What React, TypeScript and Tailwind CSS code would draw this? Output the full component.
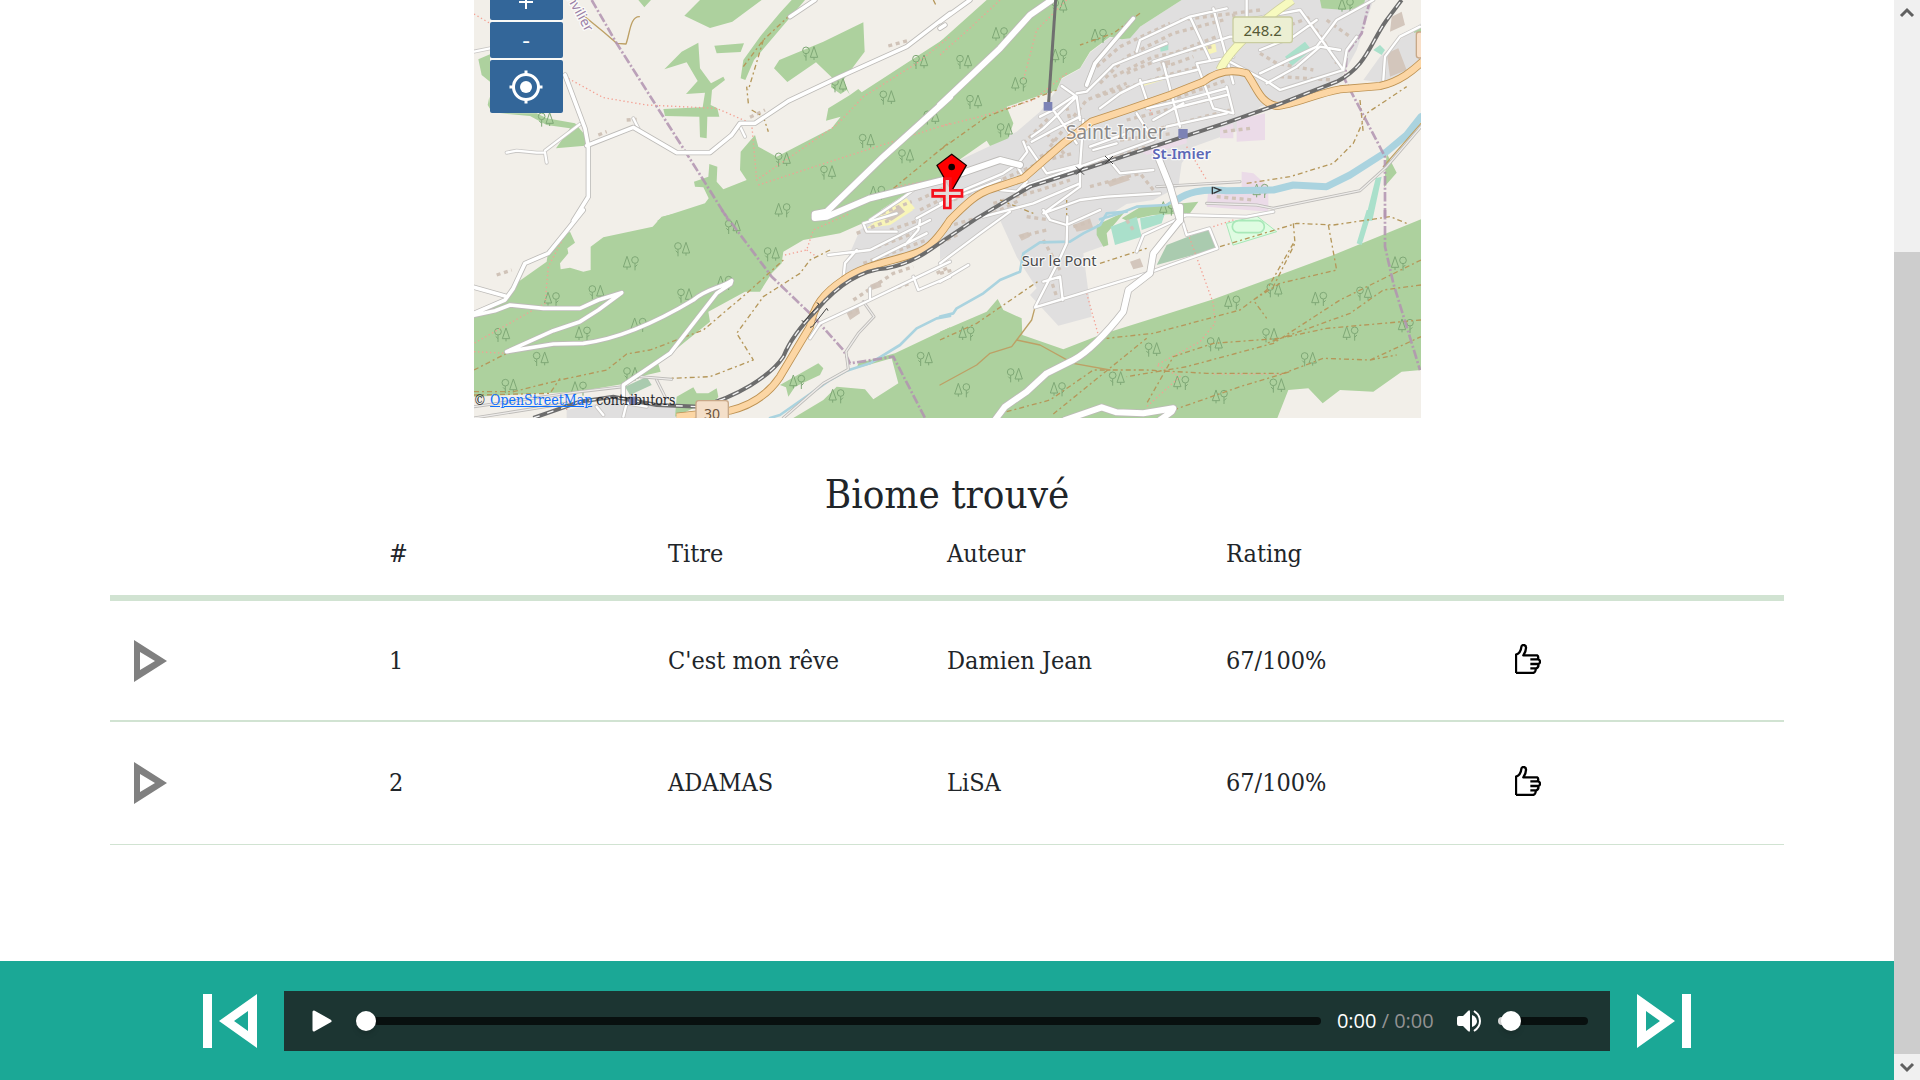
import React from "react";

type Quad = "nw" | "ne" | "sw" | "se";
type Paths = Partial<Record<Quad, string>>;

const origin: Record<Quad, string> = {
  nw: "translate(-12 0)",
  ne: "translate(1398 0)",
  sw: "translate(-12 630)",
  se: "translate(1398 630)",
};

function Layer({ d, ...rest }: { d: Paths } & Omit<React.SVGProps<SVGPathElement>, "d">) {
  return (
    <>
      {(Object.keys(d) as Quad[]).map((q) => (
        <path key={q} d={d[q]} transform={origin[q]} fill="none" strokeLinejoin="round" strokeLinecap="round" {...rest} />
      ))}
    </>
  );
}

function Road({ d, w, color = "#ffffff", casing = "#bdbbb8" }: { d: Paths; w: number; color?: string; casing?: string }) {
  return (
    <>
      <Layer d={d} stroke={casing} strokeWidth={w + 5} />
      <Layer d={d} stroke={color} strokeWidth={w} />
    </>
  );
}

const urban: Paths = {
  nw: "M1310 580L1440 515V662H1180L1240 620Z",
  ne: "M725 0L600 80L545 118L510 112L450 158L420 207L365 237L350 270L300 335L230 395L150 438L60 480L0 530V662H480L560 612L640 600L715 560L725 490L760 440L900 390L960 320L1060 290L1200 240L1250 150L1300 0ZM1380 120L1443 70V190L1340 250L1270 240L1320 170Z",
  sw: "M1170 60L1240 0H1440V60L1380 110L1230 160L1120 208L1135 140ZM290 600L460 565L620 590V624H290Z",
  se: "M180 30L0 150V0H500L470 50L490 108L430 130L455 320L355 347L270 255L290 235L230 140Z",
};

const forest: Paths = {
  nw: "M505 0L523 22L543 0ZM690 0L643 47L720 84L787 65L875 0ZM965 0L930 38L870 110L820 180L812 235L826 240L852 180L920 100L1005 0ZM733 137L822 130L812 156L740 160ZM685 128L635 155L583 208L650 187L683 243L648 282L705 278L698 322L580 327L585 348L688 350L690 412L710 415L712 350L748 350L742 325L722 315L726 270L765 240L760 230L723 250L690 205ZM1180 67L1060 125L928 180L912 205L952 246L1038 187L1085 232L1083 262L1112 282L1130 270L1140 285L1075 325L1068 362L1112 350L1085 385L920 470L865 440L855 405L812 455L810 510L830 540L760 568L740 545L742 500L718 492L715 530L672 545L675 560L700 562L716 595L705 610L580 650L560 664H1180L1310 580L1440 520V105L1175 277L1165 267L1140 285L1120 240L1184 155ZM60 163L25 178L35 225L60 245ZM58 290L53 315L62 330ZM90 340L180 348L230 375L300 385L258 445L345 437V405L315 370L230 355L200 340Z",
  ne: "M0 125L140 0H725L600 80L570 115L545 118L510 110L450 155L420 205L365 235L350 270L200 320L220 370L205 415L150 438L140 422L0 520ZM1140 0L1145 25L1215 30L1270 22L1275 0ZM545 655L600 622L775 605L750 640L640 645L560 662ZM1340 460L1370 518L1332 562ZM1422 85L1443 78V95L1422 98Z",
  sw: "M660 0L575 20L548 50L400 82L362 110V180L340 185L300 173L272 178L270 160L295 130L292 115L315 98L300 65L285 75L270 100L235 120L230 155L145 215L100 270L12 310V560L320 545L460 522L530 495L572 485L565 462L640 400L720 335L715 305L825 245L870 245L905 190L935 160L940 125L1000 90L1110 70L1200 30L1260 0ZM930 525L1045 460L1060 475L1050 495L975 530L955 560L948 532ZM620 560L670 532L680 550L715 550L740 535L745 560L735 575L680 590L615 620ZM1440 352L1275 430L1165 460L1160 475L1265 445L1285 520L1210 568L1185 538L1100 530L1060 570L970 624H1440Z",
  se: "M0 365L140 305L173 267L190 300L245 325L247 375L370 418L480 375L640 325L820 268L1180 135L1443 28V480L1385 485L1300 545L1200 540L1148 580L1105 535L1045 540L1012 624H0ZM470 45L555 5L500 70L505 105L490 110L470 75Z",
};

const buildings: Paths = {
  nw: "M1235 640L1325 605M1345 600L1430 560M1350 630L1430 590M470 360L500 358M385 405L410 395M1255 138L1320 120M840 352L885 330",
  ne: "M250 430L330 350M330 440L440 300L560 250M300 470L400 420M560 220L700 160L830 110M480 250L560 170L700 100L850 60M470 290L700 220L780 200M600 320L720 290L860 240M560 360L720 320L850 290M640 390L870 330M540 420L700 400M880 40L900 150M940 60L1010 50L980 130M960 160L1010 190L1120 210M1100 50L1150 120L1190 190M1160 60L1230 110M720 60L960 30M40 600L160 550L320 480L400 460M160 610L300 570L390 540M450 560L600 520L640 570M430 500L620 440M160 640L240 600M830 590L940 600M850 395L930 385M470 200L540 140L690 70M520 230L640 170L820 140M650 210L760 170M1020 230L1180 240M1010 90L1090 60M1030 120L1060 110M320 400L380 470M380 320L400 400",
  sw: "M1160 70L1260 30M1200 120L1330 70M1180 160L1370 90M1260 60L1350 30M1150 270L1270 190L1330 170M1260 240L1320 220M1135 310L1165 300M80 195L125 180M1400 190L1440 170",
  se: "M20 50L160 10M240 80L320 60M260 20L330 30M310 90L360 180M0 100L60 70M400 50L450 35M0 190L40 180M330 200L350 260M560 30L580 60",
};

const streets: Paths = {
  nw: "M12 155L60 145M110 458L140 452L200 458L225 458L230 488M225 452L330 372M1200 660L1290 600L1330 570M1340 655L1440 600M490 355L505 385M808 375L825 410",
  ne: "M60 575L190 520L235 490M180 570L230 575L260 545L235 505M235 490L262 455L250 425M265 440L320 520L420 495M275 425L340 390L420 350M275 410L310 385L410 290L365 258M300 350L340 330L410 430M340 330L400 290M410 290L420 360M410 280L440 275L520 195L680 130M480 325L540 280L600 250L770 210M600 240L620 300M670 190L720 380M590 155L600 120L750 50L860 25M750 50L810 180M820 25L880 250M640 185L870 110L920 110M770 190L820 325L880 340L860 260M770 190L880 170M920 0V60L1080 30L1210 210L1020 270L990 250L860 180M960 220L1130 140L1190 60L1300 0M980 250L1070 200L1140 140L1200 150M1130 60L1060 110L960 150M1250 110L1220 150L1210 210M620 325L730 300L860 265M700 325L860 285M640 360L730 310M590 340L640 420L420 500M420 500L430 360M420 500V560L310 640M500 470L540 520L640 510M310 640L420 600L500 590L660 580M130 650L280 610L420 550M250 560L420 500M530 430L460 450M680 380L860 340M1330 240L1335 170L1380 110L1440 80M450 440L560 400M0 610L180 540",
  sw: "M1075 135L1200 120L1380 30M1120 210L1125 160L1160 120M1180 40L1190 65L1280 65M1210 150L1370 70M1350 30L1345 60L1305 105M1280 10L1180 40M1020 385L1050 340L1200 270L1440 155M1200 235V265M1330 200L1345 240L1440 200M460 620L470 580L530 590M380 590L400 615",
  se: "M0 160L120 70L210 5M0 215L85 165M310 0L330 30L380 45L480 0M382 20L380 100L355 155L285 292L360 270M310 215L360 200L368 270M285 292L620 190L832 115L808 55L740 75L722 15L920 20L1000 5M590 125L610 75L740 15",
};

const mainRoads: Paths = {
  nw: "M285 225L345 385L355 440V590L310 662M350 437L490 382L620 458H720L785 405L810 370H855L955 303L1110 230L1310 140L1440 40M960 50L1035 0",
  ne: "M0 65L90 0M440 255L465 190L580 55M0 85L15 75",
  sw: "M340 0L280 75L235 130L165 160L130 235L105 270L12 310M12 232L105 258M12 316L75 302L120 285L220 295H330L385 270L455 248L385 300L330 335L250 362L110 425L250 402L340 400C420 390 520 360 670 270C710 235 750 235 785 212L782 222L740 250L600 430L460 525V560",
};

const bigRoads: Paths = {
  nw: "M1440 290L1240 470L1070 635L1034 642L1034 654L1070 650L1200 595L1440 535",
  ne: "M335 0L270 45L180 145L0 315M20 535L180 480L240 495M650 460L690 560L720 662",
  se: "M720 -10V30L640 130L630 190L565 240L550 305C500 370 440 430 400 450L320 490L260 545L195 590L165 630M375 630L485 592L530 607L610 610L700 595L695 605L660 630",
};

const footpaths: Paths = {
  nw: "M12 42L60 70M285 230L400 293L530 315L740 325L820 360L845 370L860 540L1100 375L1180 290L1340 190L1440 110M865 555L1080 485L1440 370M1280 560L1440 530",
  ne: "M0 165L100 75L180 0M380 0L290 90L250 240M380 220L280 300L120 350L0 380M630 330L640 350M740 440L800 540",
  sw: "M285 75L235 170L225 280L12 400M12 425L110 430M945 135L1010 120L1030 60L1140 10M1010 120L1040 140M290 600V560",
  se: "M820 50L880 30M740 60L820 280L825 340L780 395L650 465L720 500L620 590M440 250L475 375M820 492H1030",
};

const tracks: Paths = {
  nw: "M960 45L880 120L820 200M880 120L835 270M835 310L830 260M845 330L880 350L895 395M1240 590L1440 425M1390 0L1400 20",
  ne: "M0 450L140 350L350 270M600 40L520 100L420 135M920 550L1050 530L1180 490L1240 430L1280 340L1400 260M180 600L280 640M380 600V660M1260 300L1270 400",
  sw: "M12 480L110 430M12 545H130L270 510L410 480L470 432L540 420L700 360L830 250L940 150M1080 120L1020 150L990 190L880 260L800 370L850 450L720 500L600 505M12 555L240 550L270 505",
  se: "M0 390L110 340L300 210M480 160L620 115M840 110L1070 40L1180 45L1350 20L1400 40M1060 100L980 240L900 300L640 370L500 385M1060 40L1065 100L1000 230M1165 45L1190 180L1020 220L940 270L980 325M1443 150L1200 270L1000 400L740 470L560 500M1443 225L1330 240L1230 310L980 400M1443 330L1160 355L1020 385L820 400L700 440L620 580M200 605L330 570L460 480L620 480L800 490L1030 490L1150 445L1290 450L1443 380M340 612L620 385M700 600L900 530L1050 485M1290 450L1370 435",
};

const brownTracks: Paths = {
  nw: "M345 50L400 95L440 130L468 132C480 100 480 50 508 50",
  ne: "M1443 370L1330 500",
  se: "M285 292L275 330L230 390L215 410L150 430L110 465L0 525M230 390L300 405L400 460L510 480",
};

const streams: Paths = {
  sw: "M1440 318L1400 325L1340 355L1290 405L1200 460L1130 482L1080 510L930 615L900 624",
  se: "M0 320L40 310L50 295L130 250L180 210L240 185L250 130L300 97L390 95L430 70L480 45L500 10L560 5",
  ne: "M480 658L540 640L590 620L680 615L720 590",
};

const river: Paths = { ne: "M710 600C740 580 780 565 860 572L1000 570L1060 555L1160 560L1230 525L1340 455L1400 405L1443 350" };

const lanes: Paths = {
  ne: "M650 560L900 545M800 610L950 615L1000 625L1260 572L1340 500L1443 380",
  sw: "M1180 275L1212 320L1165 370L1128 425L1135 478L1060 520L940 624M510 500L605 508M560 510L585 560M12 590L330 545L460 530M12 624L290 580",
};

const boundary: Paths = {
  nw: "M365 0L440 130L700 540L775 660",
  sw: "M755 0L905 200L1030 320L1120 420L1140 460L1270 440L1365 624",
  ne: "M1290 0L1265 100L1220 160L1215 240L1335 470V660",
  se: "M1335 0V110L1360 220L1440 480",
};

const primary = "M608 1250L768 1232C858 1210 898 1160 918 1130L1008 980C1018 920 1048 880 1108 840C1188 780 1318 780 1368 735C1400 705 1414 680 1428 660C1478 610 1508 580 1558 565L1648 535L1768 430L1853 365L1958 330L2088 285L2188 245C2228 215 2268 205 2318 220C2348 260 2358 310 2408 318C2458 315 2528 280 2598 268L2718 258C2778 245 2818 210 2845 185";
const railway = "M178 1254L318 1205L418 1190L548 1215L678 1220C788 1190 888 1130 928 1070C948 1020 988 970 1028 930C1088 860 1158 810 1238 805C1318 790 1368 750 1408 722L1508 655L1668 560L1818 512L2038 440L2258 368L2408 315L2588 245C2678 200 2688 130 2738 60L2783 0";

// [x, y, conifer on the left]
const trees: [number, number, boolean][] = [
  [1008, 160, false], [1338, 185, false], [1240, 292, false], [1372, 352, false], [1178, 422, false], [1296, 468, false], [1062, 517, false], [926, 630, true], [926, 478, false], [1210, 578, true], [1095, 255, false], [215, 358, false],
  [1578, 102, true], [1470, 185, false], [1875, 107, true], [1756, 167, true], [1636, 252, true], [1500, 305, false], [1592, 390, false], [1756, 18, false], [2360, 572, true], [2080, 625, true], [2616, 15, true],
  [776, 680, false], [893, 762, false], [624, 747, false], [471, 789, true], [367, 876, false], [234, 897, true], [633, 886, false], [494, 974, true], [327, 1000, true], [84, 1004, false], [200, 1076, false], [106, 1157, false], [471, 1122, false], [315, 1165, true], [970, 1145, true], [1088, 1188, true], [1352, 1076, false], [752, 848, true],
  [1478, 1000, true], [1622, 1125, false], [1465, 1170, true], [1752, 1167, true], [1928, 1135, false], [2036, 1048, false], [2222, 1032, false], [2122, 1148, true], [2238, 1190, true], [2410, 1156, false], [2504, 1077, false], [2388, 1005, false], [2275, 907, true], [2401, 870, false], [2536, 896, true], [2670, 880, false], [2775, 790, true], [2796, 977, true], [2630, 1000, true],
];

function MapDrawing() {
  return (
    <svg viewBox="0 0 2841 1254" preserveAspectRatio="xMidYMax slice" className="block h-full w-full" aria-label="Carte de Saint-Imier" role="img" fontFamily='"Noto Sans", sans-serif'>
      <rect width="2841" height="1254" fill="#f2efe9" />
      <Layer d={urban} style={{ fill: "#e0dfdf" }} />
      <Layer d={forest} style={{ fill: "#add19e" }} />
      <Layer d={{ ne: "M890 360L975 340V420L890 425ZM905 515L940 520L985 560V635L800 620L805 570L905 560ZM840 385L880 370V415H840ZM600 450L740 410L740 430L620 465Z" }} style={{ fill: "#ebdbe8" }} />
      <Layer d={{ ne: "M1035 170L1095 125L1115 150L1055 198ZM1300 150L1320 135L1335 150L1325 165ZM660 140L685 132V150L662 155ZM1307 535L1325 530L1297 662H1275Z", se: "M512 50L590 20L605 80L525 105ZM600 25L675 10L665 40L605 60ZM1280 0H1297L1265 105L1250 100Z" }} style={{ fill: "#aae0cb" }} />
      <Layer d={{ se: "M860 40L950 18L1010 65L880 105Z" }} stroke="#a8e8b8" strokeWidth="3" style={{ fill: "#dffce2" }} />
      <Layer d={{ se: "M895 32H955A17 17 0 0 1 955 68H895A17 17 0 0 1 895 32Z" }} stroke="#a8e8b8" strokeWidth="5" />
      <Layer d={{ se: "M650 165L680 105L810 55L832 115Z", sw: "M465 530L530 500L545 525L480 555Z" }} style={{ fill: "#aacbaf" }} />
      <Layer d={{ nw: "M1200 655L1310 595L1335 625L1270 662Z", ne: "M605 245L665 228L670 240L610 258ZM795 140L825 125L830 155L800 165Z", sw: "M1190 55L1260 0H1330L1260 45Z" }} style={{ fill: "#f8f5b8" }} />
      <Layer d={{ nw: "M1235 655L1290 618L1305 635L1265 662Z", ne: "M1340 160L1375 145L1400 210L1350 230ZM1355 50L1385 35L1395 75L1350 95ZM660 185L690 180V195L665 198ZM500 545L560 525L570 540L510 560Z", sw: "M1130 310L1165 290L1170 310L1140 330ZM1200 225L1230 212L1235 230L1205 240Z", se: "M400 45L450 25L460 55L410 65ZM570 155L600 145L610 170L580 178ZM235 75L265 65L270 80L245 92Z" }} style={{ fill: "#d3c6bc" }} />
      <Layer d={buildings} stroke="#d0c3b8" strokeWidth="10" strokeDasharray="12 11" style={{ strokeLinecap: "butt" }} />
      <g stroke="#7fa876" strokeWidth="3" fill="none" strokeLinejoin="round">
        {trees.map(([x, y, fir]) => (
          <g key={`${x}-${y}`} transform={`translate(${x} ${y})${fir ? "" : " scale(-1 1)"}`}>
            <path d="M-12 -20L-23 12H-1ZM-12 12V20" />
            <circle cx="12" cy="-9" r="10" />
            <path d="M12 1V22M12 12L19 5" />
          </g>
        ))}
      </g>
      <Layer d={streams} stroke="#aad3df" strokeWidth="8" />
      <Layer d={river} stroke="#aad3df" strokeWidth="21" />
      <Layer d={footpaths} stroke="#f4a093" strokeWidth="4" strokeDasharray="4 8" style={{ strokeLinecap: "butt" }} />
      <Layer d={tracks} stroke="#b5975a" strokeWidth="4" strokeDasharray="15 9 6 9" style={{ strokeLinecap: "butt" }} />
      <Layer d={brownTracks} stroke="#bda065" strokeWidth="4" />
      <Layer d={boundary} stroke="#b193b0" strokeWidth="8" strokeDasharray="28 7 6 7" style={{ strokeLinecap: "butt" }} opacity="0.85" />
      <Road d={lanes} w={4} color="#eeecea" />
      <Road d={streets} w={7} casing="#c9c7c5" />
      <Road d={mainRoads} w={11} />
      <Road d={bigRoads} w={18} />
      <path d="M1745 0L1723 320" stroke="#6f6f6f" strokeWidth="9" />
      <path d="M2238 210C2270 140 2380 50 2455 0" fill="none" stroke="#cfd0a0" strokeWidth="27" />
      <path d="M2238 210C2270 140 2380 50 2455 0" fill="none" stroke="#f7fabf" strokeWidth="22" />
      <path d={primary} fill="none" stroke="#bd9253" strokeWidth="24" />
      <path d={primary} fill="none" stroke="#fcd6a4" strokeWidth="19" />
      <path d={railway} fill="none" stroke="#6d6d6d" strokeWidth="12" />
      <path d={railway} fill="none" stroke="#f5f5f5" strokeWidth="4" strokeDasharray="20 24" />
      <path d="M990 965L1035 912M1015 980L1058 925M983 962L990 965M1008 982L1015 980M1028 908L1035 912M1058 925L1062 932M1806 500L1830 524M1830 500L1806 524M1893 468L1917 492M1917 468L1893 492" stroke="#444" strokeWidth="3" fill="none" />
      <path d="M2215 560V583M2218 562L2240 570L2218 580" stroke="#333" strokeWidth="4" fill="none" />
      <g fill="#7c82b5">
        <rect x="1709" y="306" width="26" height="26" />
        <rect x="2113" y="387" width="28" height="28" />
        <rect x="465" y="1190" width="24" height="24" />
      </g>
      <rect x="2277" y="51" width="178" height="77" rx="8" fill="#ecefd3" stroke="#c9cda0" strokeWidth="4" />
      <text x="2366" y="108" textAnchor="middle" fontSize="45" fill="#555a36">248.2</text>
      <rect x="2827" y="96" width="40" height="78" rx="8" fill="#f8dfc8" stroke="#c8a888" strokeWidth="4" />
      <rect x="666" y="1202" width="97" height="80" rx="8" fill="#f4dfc9" stroke="#c8a888" strokeWidth="4" />
      <text x="714" y="1256" textAnchor="middle" fontSize="42" fill="#6b533c">30</text>
      <g stroke="#fff" strokeWidth="7" strokeOpacity="0.75" paintOrder="stroke" strokeLinejoin="round">
        <text x="1775" y="418" fontSize="58" fill="#8a8888">Saint-Imier</text>
        <text x="2035" y="476" fontSize="45" fontWeight="600" fill="#5b68b8">St-Imier</text>
        <text x="1643" y="798" fontSize="44" fill="#4a4a4a">Sur le Pont</text>
        <text transform="translate(266 -27) rotate(61)" x="0" y="0" fontSize="41" fill="#9a7fa6">onvilier</text>
      </g>
      <path d="M1433 463L1477 496L1433 573L1389 496Z" fill="#f00" stroke="#1a0000" strokeWidth="4" />
      <circle cx="1433" cy="501" r="10" fill="#100" />
      <path d="M1411 536H1429V571H1464V589H1429V624H1411V589H1376V571H1411Z" fill="#e4dcda" fillOpacity="0.9" stroke="#f5101c" strokeWidth="8" />
    </svg>
  );
}

const mapButton = "flex w-full items-center justify-center rounded-xs bg-[#336699] text-white";

function MapPanel() {
  return (
    <section className="relative mx-auto h-[418px] w-1/2 overflow-hidden">
      <MapDrawing />
      <div className="absolute -top-4 left-4 flex w-[73px] flex-col gap-0.5 bg-white/60">
        <button type="button" aria-label="Zoom avant" className={`${mapButton} h-9`}>
          <svg viewBox="0 0 14 14" className="h-3.5 w-3.5"><path d="M7 0V14M0 7H14" stroke="#fff" strokeWidth="2" /></svg>
        </button>
        <button type="button" className={`${mapButton} h-9 font-['Open_Sans',sans-serif] text-2xl leading-none`}>-</button>
        <button type="button" aria-label="Me localiser" className={`${mapButton} h-[53px]`}>
          <svg viewBox="0 0 34 34" className="h-[34px] w-[34px]" fill="none" stroke="#fff">
            <circle cx="17" cy="17" r="12.5" strokeWidth="3" />
            <circle cx="17" cy="17" r="6" fill="#fff" stroke="none" />
            <path d="M17 0.500V5M17 29V33.500M0.500 17H5M29 17H33.500" strokeWidth="3" />
          </svg>
        </button>
      </div>
      <p className="absolute bottom-2 left-0 text-sm leading-5">
        © <a href="#osm" className="text-[#0d6efd] underline">OpenStreetMap</a> contributors
      </p>
    </section>
  );
}

function ThumbIcon() {
  return (
    <svg viewBox="0 0 78 90" className="h-[30px] w-[26px]" fill="none" stroke="#000" strokeWidth="7" strokeLinejoin="round">
      <path d="M3 87V32C12 29 18 20 19 9C20 0 34 1 33 12C33 20 29 28 25 34H66C71 37 71 44 66 46H46M66 46H70C77 50 77 57 70 60H46M70 60C71 66 69 71 64 73H46M62 73C63 80 59 86 54 87H3" />
    </svg>
  );
}

const songs = [
  { id: 1, title: "C'est mon rêve", author: "Damien Jean", rating: "67/100%" },
  { id: 2, title: "ADAMAS", author: "LiSA", rating: "67/100%" },
];

function Songs() {
  return (
    <section className="mx-auto mt-13 w-[1674px] max-w-[90%]">
      <h1 className="text-center text-[40px] leading-12">Biome trouvé</h1>
      <table className="w-full table-fixed border-collapse text-left text-[25px]">
        <thead>
          <tr className="h-20 border-b-6 border-[#d1e3d2]">
            <td />
            <th scope="col" className="pb-1.5 font-normal">#</th>
            <th scope="col" className="pb-1.5 font-normal">Titre</th>
            <th scope="col" className="pb-1.5 font-normal">Auteur</th>
            <th scope="col" className="pb-1.5 font-normal">Rating</th>
            <td />
          </tr>
        </thead>
        <tbody>
          {songs.map((s) => (
            <tr key={s.id} className="h-[123px] border-b-2 border-[#d1e3d2] last:border-b">
              <td>
                <button type="button" aria-label={`Lire ${s.title}`} className="ml-6 block">
                  <svg viewBox="0 0 33 42" className="h-[42px] w-[33px]"><path fill="#808080" fillRule="evenodd" d="M0 0L33 21L0 42ZM6 12V30L21 21Z" /></svg>
                </button>
              </td>
              <td>{s.id}</td>
              <td>{s.title}</td>
              <td>{s.author}</td>
              <td>{s.rating}</td>
              <td>
                <button type="button" aria-label={`Aimer ${s.title}`} className="mb-1 ml-2.5 block"><ThumbIcon /></button>
              </td>
            </tr>
          ))}
        </tbody>
      </table>
    </section>
  );
}

const slider =
  "h-5 cursor-pointer appearance-none bg-transparent [&::-webkit-slider-runnable-track]:h-2 [&::-webkit-slider-runnable-track]:rounded-full [&::-webkit-slider-runnable-track]:bg-[#08100f] [&::-webkit-slider-thumb]:-mt-1.5 [&::-webkit-slider-thumb]:size-5 [&::-webkit-slider-thumb]:appearance-none [&::-webkit-slider-thumb]:rounded-full [&::-webkit-slider-thumb]:bg-white [&::-webkit-slider-thumb]:shadow-md";

function SkipIcon({ className = "" }: { className?: string }) {
  return (
    <svg viewBox="0 0 54 54" className={`size-[54px] ${className}`}>
      <path fill="#fff" fillRule="evenodd" d="M0 0L38 27L0 54ZM9 17V37L23 27ZM45 0H54V54H45Z" />
    </svg>
  );
}

function Player() {
  return (
    <footer className="mt-auto flex h-[119px] items-center justify-center bg-[#1ba896]">
      <button type="button" aria-label="Précédent" className="mr-[27px]"><SkipIcon className="-scale-x-100" /></button>
      <div className="flex h-15 w-[70%] items-center bg-[#1c3532] pr-[22px] pl-7">
        <button type="button" aria-label="Lecture">
          <svg viewBox="0 0 20 22" className="h-[22px] w-5"><path d="M2 2V20L18 11Z" fill="#fff" stroke="#fff" strokeWidth="3" strokeLinejoin="round" /></svg>
        </button>
        <input type="range" aria-label="Position" min={0} max={100} defaultValue={0} className={`${slider} ml-6 min-w-0 flex-1`} />
        <p className="ml-4 w-[98px] font-['Open_Sans',sans-serif] text-xl leading-6 whitespace-nowrap text-[#929292]">
          <span className="text-white">0:00</span> / 0:00
        </p>
        <button type="button" aria-label="Muet" className="ml-[22px]">
          <svg viewBox="0 0 24 22" className="h-[22px] w-6" fill="none">
            <path d="M0 8Q0 6 2 6H6L11 1Q13 -1 13 2V20Q13 23 11 21L6 16H2Q0 16 0 14Z" fill="#fff" />
            <path d="M15 5Q20 7 20 11T15 17Z" fill="#fff" />
            <path d="M17 1Q23 5 23 11T17 21" stroke="#fff" strokeWidth="2" />
          </svg>
        </button>
        <input type="range" aria-label="Volume" min={0} max={100} defaultValue={4} className={`${slider} ml-[17px] w-[90px] [&::-webkit-slider-runnable-track]:bg-linear-to-r [&::-webkit-slider-runnable-track]:from-[#d8d8d8] [&::-webkit-slider-runnable-track]:from-10% [&::-webkit-slider-runnable-track]:to-[#08100f] [&::-webkit-slider-runnable-track]:to-10%`} />
      </div>
      <button type="button" aria-label="Suivant" className="ml-[27px]"><SkipIcon /></button>
    </footer>
  );
}

function ScrollTrack() {
  return (
    <div className="flex w-[26px] shrink-0 flex-col items-center bg-[#f0f0f0]" aria-hidden="true">
      <svg viewBox="0 0 26 26" className="size-[26px]"><path d="M7 16L13 10L19 16" fill="none" stroke="#606060" strokeWidth="3" /></svg>
      <div className="flex w-full flex-1 flex-col justify-end">
        <div className="h-[78%] w-full bg-[#cdcdcd]" />
      </div>
      <svg viewBox="0 0 26 26" className="size-[26px]"><path d="M7 10L13 16L19 10" fill="none" stroke="#606060" strokeWidth="3" /></svg>
    </div>
  );
}

export default function App() {
  return (
    <div className="flex min-h-screen bg-white font-['DejaVu_Serif_Condensed','DejaVu_Serif',serif] text-[#212529]">
      <main className="flex min-w-0 flex-1 flex-col">
        <MapPanel />
        <Songs />
        <Player />
      </main>
      <ScrollTrack />
    </div>
  );
}
